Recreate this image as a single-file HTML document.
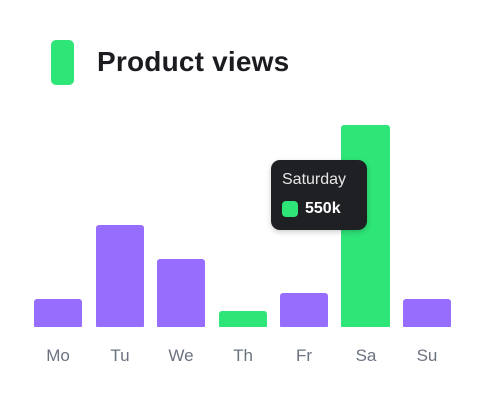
<!DOCTYPE html>
<html><head><style>
body{margin:0;width:486px;height:404px;background:#fff;position:relative;overflow:hidden;font-family:"Liberation Sans",sans-serif}
.a{position:absolute}
.bar{position:absolute;width:48px;border-radius:3px 3px 1px 1px;background:#976dfd}
.g{background:#2ee578}
.l{position:absolute;top:346px;width:60px;text-align:center;font-size:17px;color:#6b7280}
</style></head><body>
<div class="a" style="left:51px;top:40px;width:23px;height:45px;border-radius:5px;background:#2ee578"></div>
<div class="a" style="left:97px;top:46px;font-size:28px;letter-spacing:0.2px;font-weight:bold;color:#1b1c1f">Product views</div>
<div class="bar" style="left:34px;top:299px;height:28px"></div>
<div class="bar" style="left:96px;top:225px;height:102px"></div>
<div class="bar" style="left:157px;top:259px;height:68px"></div>
<div class="bar g" style="left:219px;top:311px;height:16px"></div>
<div class="bar" style="left:280px;top:293px;height:34px"></div>
<div class="bar g" style="left:341px;top:125px;height:202px;width:49px"></div>
<div class="bar" style="left:403px;top:299px;height:28px"></div>
<div class="l" style="left:28px">Mo</div>
<div class="l" style="left:90px">Tu</div>
<div class="l" style="left:151px">We</div>
<div class="l" style="left:213px">Th</div>
<div class="l" style="left:274px">Fr</div>
<div class="l" style="left:336px">Sa</div>
<div class="l" style="left:397px">Su</div>
<div class="a" style="left:271px;top:160px;width:96px;height:70px;border-radius:9px;background:#1f2024;box-shadow:0 2px 6px rgba(0,0,0,.2)">
<div class="a" style="left:11px;top:11px;font-size:16px;color:#e6e6e8">Saturday</div>
<div class="a" style="left:11px;top:41px;width:16px;height:16px;border-radius:4px;background:#2ee578"></div>
<div class="a" style="left:34px;top:40px;font-size:16px;font-weight:bold;color:#fff">550k</div>
</div>
</body></html>
